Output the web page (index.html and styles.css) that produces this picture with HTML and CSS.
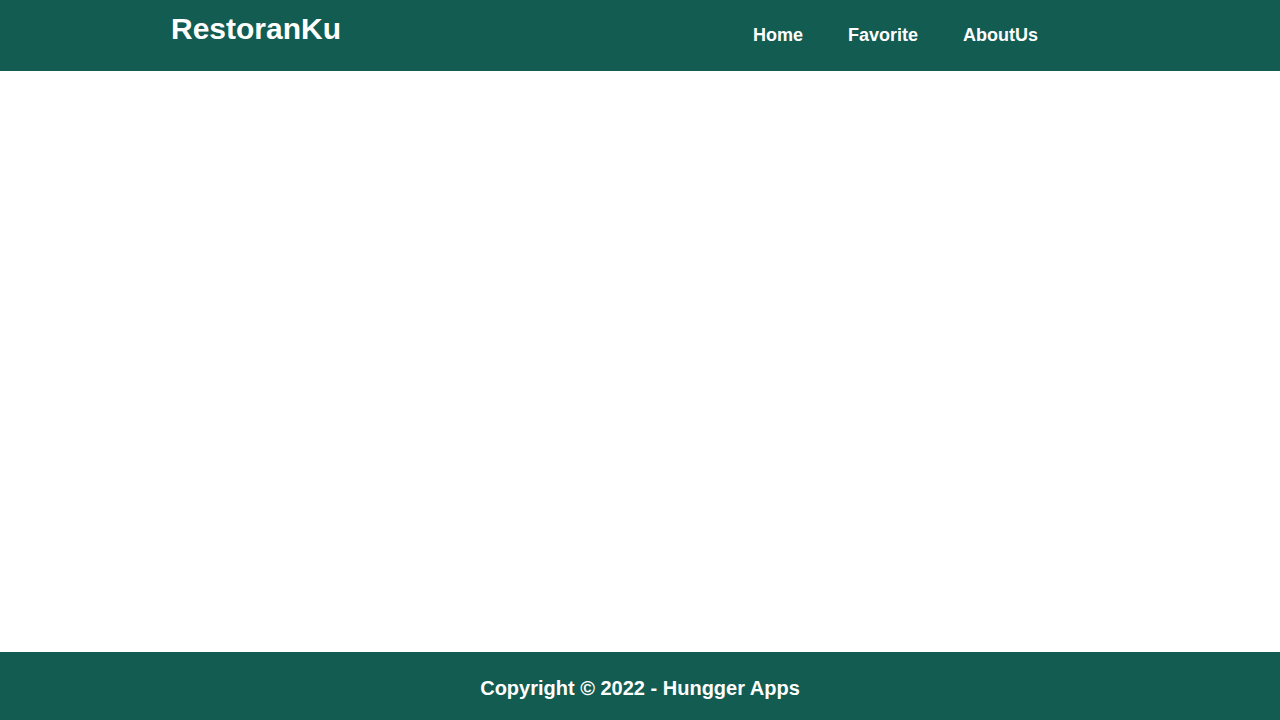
FILE: index.html
```html
<!DOCTYPE html>
<html lang="id">
<head>
<meta charset="utf-8">
<title>RestoranKu</title>
<link rel="stylesheet" href="styles.css">
</head>
<body>
<header class="app-bar">
  <h1 class="app-title">RestoranKu</h1>
  <nav class="nav">
    <a class="nav-link" href="#">Home</a>
    <a class="nav-link" href="#">Favorite</a>
    <a class="nav-link" href="#">AboutUs</a>
  </nav>
</header>
<main class="content"></main>
<footer class="footer">
  <p class="footer-text">Copyright © 2022 - Hungger Apps</p>
</footer>
</body>
</html>
```
FILE: styles.css
```css
* { box-sizing: border-box; }
html, body { margin: 0; padding: 0; }
body {
  font-family: "Liberation Sans", Arial, sans-serif;
  min-height: 100vh;
  display: flex;
  flex-direction: column;
  background: #ffffff;
}
.app-bar {
  background: #125c52;
  height: 71px;
  display: flex;
  justify-content: space-between;
  align-items: flex-start;
  padding: 0 242px 0 171px;
}
.app-title {
  margin: 12px 0 0 0;
  font-size: 30px;
  font-weight: bold;
  color: #ffffff;
  line-height: normal;
}
.nav {
  display: flex;
  gap: 45px;
  margin-top: 25px;
}
.nav-link {
  color: #ffffff;
  text-decoration: none;
  font-size: 18px;
  font-weight: bold;
  line-height: normal;
}
.content { flex: 1; }
.footer {
  background: #125c52;
  height: 68px;
  padding-top: 25px;
}
.footer-text {
  margin: 0;
  text-align: center;
  color: #ffffff;
  font-size: 20px;
  font-weight: bold;
  line-height: normal;
}
```
